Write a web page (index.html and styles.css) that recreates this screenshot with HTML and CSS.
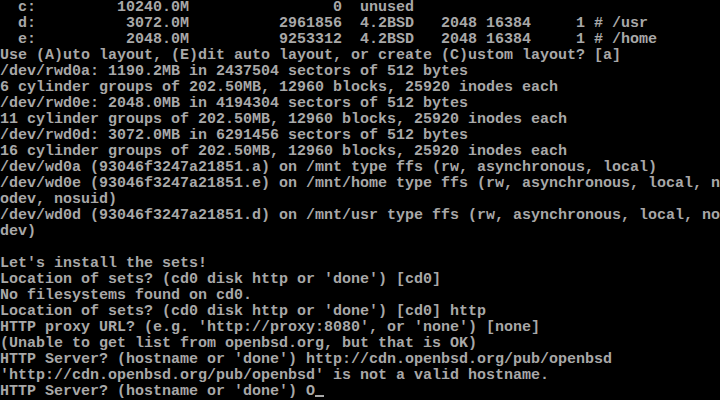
FILE: index.html
```html
<!DOCTYPE html>
<html>
<head>
<meta charset="utf-8">
<link rel="stylesheet" href="styles.css">
</head>
<body>
<pre class="console">  c:         10240.0M                0  unused
  d:          3072.0M          2961856  4.2BSD   2048 16384     1 # /usr
  e:          2048.0M          9253312  4.2BSD   2048 16384     1 # /home
Use (A)uto layout, (E)dit auto layout, or create (C)ustom layout? [a]
/dev/rwd0a: 1190.2MB in 2437504 sectors of 512 bytes
6 cylinder groups of 202.50MB, 12960 blocks, 25920 inodes each
/dev/rwd0e: 2048.0MB in 4194304 sectors of 512 bytes
11 cylinder groups of 202.50MB, 12960 blocks, 25920 inodes each
/dev/rwd0d: 3072.0MB in 6291456 sectors of 512 bytes
16 cylinder groups of 202.50MB, 12960 blocks, 25920 inodes each
/dev/wd0a (93046f3247a21851.a) on /mnt type ffs (rw, asynchronous, local)
/dev/wd0e (93046f3247a21851.e) on /mnt/home type ffs (rw, asynchronous, local, n
odev, nosuid)
/dev/wd0d (93046f3247a21851.d) on /mnt/usr type ffs (rw, asynchronous, local, no
dev)

Let's install the sets!
Location of sets? (cd0 disk http or 'done') [cd0]
No filesystems found on cd0.
Location of sets? (cd0 disk http or 'done') [cd0] http
HTTP proxy URL? (e.g. 'http://proxy:8080', or 'none') [none]
(Unable to get list from openbsd.org, but that is OK)
HTTP Server? (hostname or 'done') http://cdn.openbsd.org/pub/openbsd
'http://cdn.openbsd.org/pub/openbsd' is not a valid hostname.
HTTP Server? (hostname or 'done') O<span class="cursor"></span></pre>
</body>
</html>
```
FILE: styles.css
```css
html, body {
  margin: 0;
  padding: 0;
  background: #000;
  width: 720px;
  height: 400px;
  overflow: hidden;
}
.console {
  margin: 0;
  padding: 0;
  font-family: "Liberation Mono", monospace;
  font-size: 15px;
  font-weight: bold;
  line-height: 16px;
  color: #a8a8a8;
  white-space: pre;
}
.cursor {
  display: inline-block;
  width: 9px;
  height: 2px;
  background: #a8a8a8;
  vertical-align: -2px;
}
```
